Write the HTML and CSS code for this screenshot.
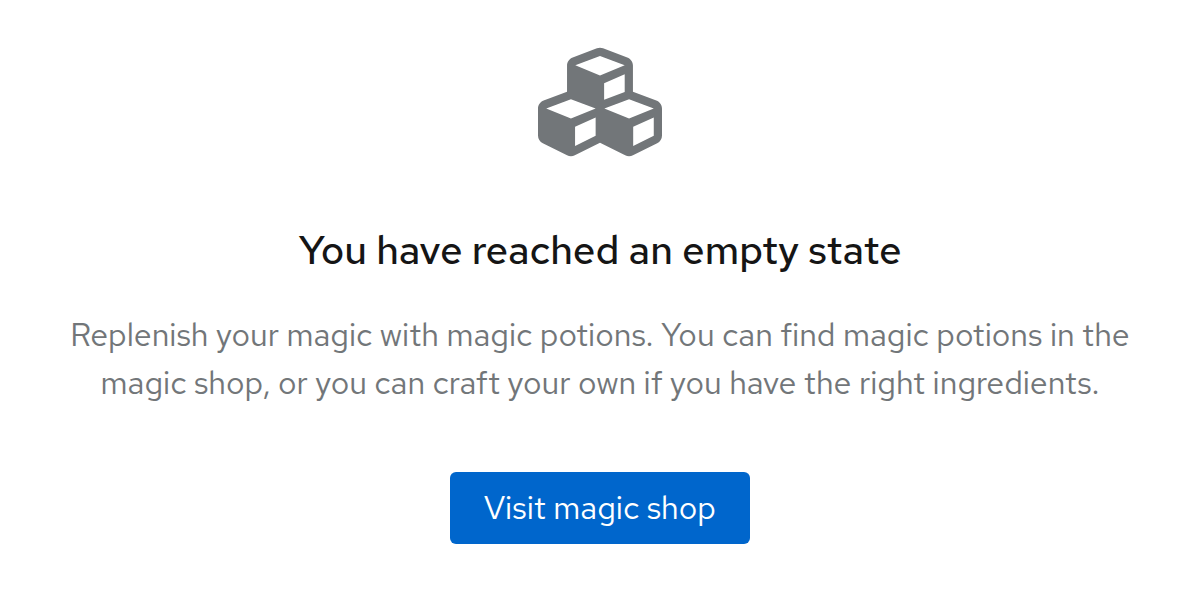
FILE: index.html
```html
<!DOCTYPE html>
<html lang="en">
<head>
<meta charset="utf-8">
<title>Empty state</title>
<link rel="stylesheet" href="styles.css">
</head>
<body>
<main class="empty-state">
  <svg class="empty-state-icon" viewBox="0 0 512 512" aria-hidden="true">
    <path fill="currentColor" d="M488.600 250.200L392 214V105.500c0-15-9.300-28.400-23.400-33.700l-100-37.500c-8.100-3.100-17.100-3.100-25.300 0l-100 37.500c-14.100 5.300-23.400 18.700-23.400 33.700V214l-96.600 36.200C9.300 255.500 0 268.900 0 283.900V394c0 13.600 7.700 26.100 19.900 32.200l100 50c10.100 5.100 22.100 5.100 32.200 0l103.900-52 103.900 52c10.100 5.100 22.100 5.100 32.200 0l100-50c12.200-6.100 19.900-18.600 19.900-32.200V283.900c0-15-9.300-28.400-23.400-33.700zM358 214.800l-85 31.900v-68.200l85-37v73.300zM154 104.100l102-38.200 102 38.200v.6l-102 41.400-102-41.400v-.6zm84 291.100l-85 42.500v-79.100l85-38.800v75.400zm0-112l-102 41.400-102-41.400v-.6l102-38.200 102 38.200v.6zm240 112l-85 42.500v-79.100l85-38.800v75.400zm0-112l-102 41.400-102-41.400v-.6l102-38.200 102 38.200v.6z"/>
  </svg>
  <h1 class="empty-state-title">You have reached an empty state</h1>
  <p class="empty-state-body">Replenish your magic with magic potions. You can find magic potions in the magic shop, or you can craft your own if you have the right ingredients.</p>
  <button class="button" type="button">Visit magic shop</button>
</main>
</body>
</html>
```
FILE: styles.css
```css
body {
  margin: 0;
  background: #fff;
  font-family: "Red Hat Text", Lato, sans-serif;
}
.empty-state {
  display: flex;
  flex-direction: column;
  align-items: center;
  padding: 40px 64px 48px;
  text-align: center;
}
.empty-state-icon {
  width: 124px;
  height: 124px;
  color: #727679;
}
.empty-state-title {
  margin: 58px 0 0;
  color: #151515;
  font-size: 40px;
  font-weight: 500;
  line-height: 56px;
}
.empty-state-body {
  margin: 33px 0 0;
  color: #727679;
  font-size: 32px;
  line-height: 48px;
}
.button {
  margin-top: 65px;
  padding: 12px 34px;
  border: 0;
  border-radius: 6px;
  background: #06c;
  color: #fff;
  font-family: inherit;
  font-size: 32px;
  line-height: 48px;
}
```
